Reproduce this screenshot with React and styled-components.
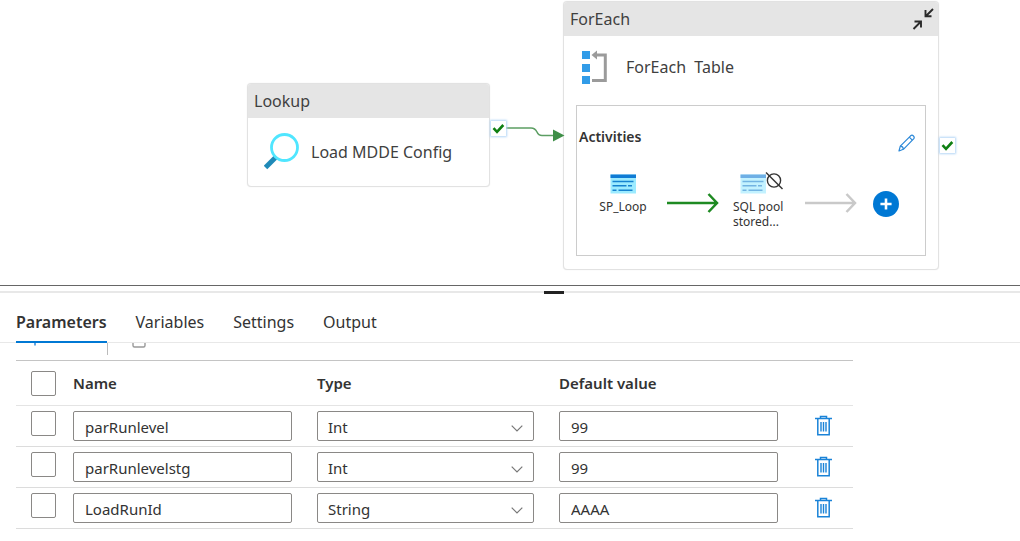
import React, { useState } from "react";
import styled, { createGlobalStyle } from "styled-components";

const GlobalStyle = createGlobalStyle`
  * { box-sizing: border-box; }
  body { margin: 0; background: #fff; }
  body, button, input, select {
    font-family: "Noto Sans", "Open Sans", "Segoe UI", sans-serif;
    font-size: 15px;
    color: #333;
  }
  button { border: 0; padding: 0; background: none; cursor: pointer; }
  svg { display: block; }
`;

const Page = styled.div`
  display: flex;
  flex-direction: column;
  min-height: 100vh;
`;

/* ---------- pipeline canvas ---------- */

const Canvas = styled.main`
  position: relative;
  height: 286px;
  overflow: hidden;
  border-bottom: 1px solid #666;
`;

const Node = styled.section`
  position: absolute;
  left: ${(p) => p.$x}px;
  top: ${(p) => p.$y}px;
  width: ${(p) => p.$width}px;
  background: #fff;
  border: 1px solid #e2e2e2;
  border-radius: 4px;
  box-shadow: 0 0 1px rgba(0, 0, 0, 0.12);
`;

const NodeHeader = styled.header`
  display: flex;
  align-items: center;
  justify-content: space-between;
  height: 34px;
  padding: 0 4px 0 6px;
  background: #e5e5e5;
  border-radius: 3px 3px 0 0;
`;

const NodeKind = styled.span`
  font-size: 16px;
  line-height: 24px;
  color: #404040;
`;

const NodeBody = styled.div`
  display: flex;
  align-items: center;
  gap: ${(p) => p.$gap}px;
  height: ${(p) => p.$height}px;
  padding: 0 16px;
`;

const NodeName = styled.span`
  font-size: 16px;
  line-height: 24px;
  white-space: pre;
  color: #404040;
`;

const Connector = styled.svg`
  position: absolute;
  left: 500px;
  top: 116px;
`;

const Port = styled.span`
  position: absolute;
  left: ${(p) => p.$x}px;
  top: ${(p) => p.$y}px;
  display: grid;
  place-items: center;
  width: 15px;
  height: 15px;
  background: #fff;
  box-shadow: 0 0 2px 1px #b5d6f6;
`;

const ActivityPanel = styled.div`
  margin: 8px 12px 13px;
  height: 151px;
  padding: 20px 0 0 2px;
  border: 1px solid #ccc;
`;

const ActivityHeading = styled.div`
  display: flex;
  align-items: flex-start;
  justify-content: space-between;
  height: 48px;
  padding-right: 10px;
`;

const ActivityTitle = styled.h2`
  margin: 0;
  font-size: 14px;
  line-height: 22px;
  font-weight: 600;
  color: #333;
`;

const EditButton = styled.button`
  padding-top: 8px;
`;

const ActivityFlow = styled.div`
  display: flex;
  align-items: flex-start;
`;

const Activity = styled.figure`
  display: flex;
  flex-direction: column;
  align-items: ${(p) => (p.$wide ? "flex-start" : "center")};
  width: ${(p) => (p.$wide ? 72 : 88)}px;
  margin: 0;
`;

const ActivityIcon = styled.span`
  display: flex;
  height: 25px;
  padding-left: ${(p) => (p.$inset ? 7 : 0)}px;
`;

const ActivityLabel = styled.figcaption`
  width: ${(p) => (p.$narrow ? "56px" : "auto")};
  font-size: 12px;
  line-height: 15px;
  color: #333;
`;

const FlowArrow = styled.span`
  flex: none;
  width: ${(p) => p.$width}px;
  padding-top: 19px;
`;

const AddButton = styled.button`
  display: grid;
  place-items: center;
  width: 26px;
  height: 26px;
  margin: 17px 0 0 16px;
  border-radius: 50%;
  background: #0078d4;
`;

/* ---------- properties pane ---------- */

const Splitter = styled.div`
  display: flex;
  justify-content: center;
  height: 9px;
  padding: 5px 0 0;
`;

const SplitterLine = styled.div`
  display: flex;
  justify-content: center;
  width: 100%;
  height: 2px;
  background: #e8e8e8;
`;

const SplitterHandle = styled.span`
  width: 20px;
  height: 3px;
  margin-left: 88px;
  background: #222;
`;

const TabBar = styled.div`
  display: flex;
  gap: 29px;
  height: 48px;
  padding: 3px 16px 0;
  border-bottom: 1px solid #e8e8e8;
`;

const Tab = styled.button`
  height: 45px;
  padding-top: 4px;
  font-size: 16px;
  line-height: 22px;
  font-weight: ${(p) => (p.$active ? 600 : 400)};
  border-bottom: 2px solid ${(p) => (p.$active ? "#0078d4" : "transparent")};
`;

const ToolbarClip = styled.div`
  display: flex;
  align-items: flex-end;
  height: 17px;
  padding: 0 16px 5px;
  overflow: hidden;
`;

const Toolbar = styled.div`
  display: flex;
  align-items: center;
  height: 32px;
  padding-left: 12px;
`;

const Divider = styled.span`
  width: 1px;
  height: 32px;
  margin: 0 24px 0 65px;
  background: #bbb;
`;

const TableArea = styled.div`
  padding: 0 16px 12px;
`;

const ParameterTable = styled.table`
  width: 100%;
  max-width: 837px;
  table-layout: fixed;
  border-collapse: separate;
  border-spacing: 0;
  border-top: 1px solid #c4c4c4;
`;

const Col = styled.col`
  width: ${(p) => p.$width};
`;

const HeadCell = styled.th`
  height: 45px;
  padding: 0;
  text-align: left;
  font-size: 15px;
  line-height: 24px;
  font-weight: 600;
  border-bottom: 1px solid #e4e4e4;
`;

const Cell = styled.td`
  height: 41px;
  padding: 5px 25px 5px 0;
  vertical-align: top;
  border-bottom: 1px solid #dcdcdc;
`;

const ActionCell = styled(Cell)`
  padding-left: 12px;
  padding-right: 0;
`;

const Check = styled.input`
  appearance: none;
  display: block;
  width: 25px;
  height: 25px;
  margin: 0 0 0 15px;
  border: 1px solid #8a8886;
  border-radius: 2px;
  background: #fff;
  &:checked { background: #0078d4; }
`;

const TextField = styled.input`
  display: block;
  width: 100%;
  height: 30px;
  padding: 1px 10px 0 11px;
  border: 1px solid #8a8886;
  border-radius: 2px;
  background: #fff;
`;

const SelectWrap = styled.div`
  position: relative;
`;

const SelectField = styled.select`
  appearance: none;
  display: block;
  width: 100%;
  height: 30px;
  padding: 1px 30px 0 10px;
  border: 1px solid #8a8886;
  border-radius: 2px;
  background: #fff;
`;

const Chevron = styled.svg`
  position: absolute;
  right: 11px;
  top: 14px;
  pointer-events: none;
`;

const DeleteButton = styled.button`
  display: block;
  padding-top: 4px;
`;

/* ---------- drawings ---------- */

const CheckMark = () => (
  <svg width="13" height="12" viewBox="0 0 13 12" fill="none" aria-hidden="true">
    <path d="M1.5 5.2 L5 8.8 L11.3 2" stroke="#0e7f12" strokeWidth="2.6" />
  </svg>
);

const LookupIcon = () => (
  <svg width="36" height="38" viewBox="0 0 36 38" fill="none" aria-hidden="true">
    <path d="M11.5 24.5 L1.5 34.5" stroke="#1f8ab8" strokeWidth="5" />
    <circle cx="20.5" cy="14.5" r="13" fill="#fff" stroke="#50e6ff" strokeWidth="2.8" />
  </svg>
);

const ForEachIcon = () => (
  <svg width="27" height="34" viewBox="0 0 27 34" fill="none" aria-hidden="true">
    <path d="M2 1h8v8H2zM2 14h8v8H2zM2 26h8v8H2z" fill="#329ce8" />
    <path d="M14 5 H25.3 V30.5 H12" stroke="#9b9b9b" strokeWidth="3" />
    <path d="M11.5 5 L17 0.5 V9.5 Z" fill="#9b9b9b" />
  </svg>
);

const CollapseIcon = () => (
  <svg width="22" height="22" viewBox="0 0 22 22" fill="none" stroke="#2a2a2a" strokeWidth="1.9" aria-hidden="true">
    <path d="M21 1 L14 8 M13.5 2 V8.3 H19.5" />
    <path d="M1.5 21 L8.5 14 M2.5 13.5 H9 V19.5" />
  </svg>
);

const PencilIcon = () => (
  <svg width="17" height="18" viewBox="0 0 17 18" fill="none" stroke="#2b88d8" strokeWidth="1.2" strokeLinejoin="round" aria-hidden="true">
    <path d="M1 17 L2.3 12.2 L12.6 1.8 C14.5 0.2 17.3 2.8 15.6 4.9 L5.4 15.3 Z" />
    <path d="M11.3 3.2 L14.3 6.2 M2.3 12.2 C4 12.3 5.3 13.4 5.4 15.3" />
  </svg>
);

const ProcedureIcon = ({ faded }) => (
  <svg width="26" height="20" viewBox="0 0 26 20" opacity={faded ? 0.6 : 1} aria-hidden="true">
    <path d="M0.5 0.5h25.5v19H0.5z" fill="#9cebff" />
    <path d="M0.5 0.5h25.5v3.5H0.5z" fill="#0f7bd4" />
    <path
      d="M2.5 7.5h21 M2.5 11.8h14 M18 11.8h4 M2.5 16.2h4 M8.5 16.2h14"
      stroke="#1683cf"
      strokeWidth="1.6"
    />
  </svg>
);

const SkippedIcon = () => (
  <svg width="18" height="18" viewBox="0 0 18 18" fill="none" stroke="#333" strokeWidth="1.4" aria-hidden="true">
    <circle cx="8" cy="6.5" r="6.6" />
    <path d="M0 -1.5 L16.5 15" />
  </svg>
);

const SkippedMark = styled.span`
  svg { overflow: visible; }
`;

const Arrow = ({ color }) => (
  <svg width="52" height="20" viewBox="0 0 52 20" fill="none" stroke={color} strokeWidth="2.5" aria-hidden="true">
    <path d="M0 10 H50 M41.5 1 L50 10 L41.5 19" />
  </svg>
);

const TrashIcon = () => (
  <svg width="17" height="21" viewBox="0 0 17 21" fill="none" stroke="#1a83d8" aria-hidden="true">
    <path d="M0 3.5 H17" strokeWidth="1.5" />
    <path d="M5.5 3 V1.5 H11.5 V3 M2.8 3.5 V19.8 H14.2 V3.5" strokeWidth="1.5" />
    <path d="M6 7 V16.5 M8.5 7 V16.5 M11 7 V16.5" strokeWidth="1.4" />
  </svg>
);

const PlusIcon = ({ size, color, weight }) => (
  <svg width={size} height={size} viewBox="0 0 14 14" stroke={color} strokeWidth={weight} aria-hidden="true">
    <path d="M7 0.5 V13.5 M0.5 7 H13.5" />
  </svg>
);

const ToolbarTrash = () => (
  <svg width="14" height="17" viewBox="0 0 14 17" fill="none" stroke="#999" strokeWidth="1.4" aria-hidden="true">
    <path d="M0 3 H14 M1 3 V14.5 Q1 16 2.5 16 H11.5 Q13 16 13 14.5 V3" />
  </svg>
);

const TABS = ["Parameters", "Variables", "Settings", "Output"];

const PARAMETERS = [
  { name: "parRunlevel", type: "Int", value: "99" },
  { name: "parRunlevelstg", type: "Int", value: "99" },
  { name: "LoadRunId", type: "String", value: "AAAA" },
];

function PipelineCanvas() {
  return (
    <Canvas>
      <Node $x={247} $y={83} $width={243}>
        <NodeHeader>
          <NodeKind>Lookup</NodeKind>
        </NodeHeader>
        <NodeBody $gap={11} $height={68}>
          <LookupIcon />
          <NodeName>Load MDDE Config</NodeName>
        </NodeBody>
      </Node>

      <Node $x={563} $y={1} $width={376}>
        <NodeHeader>
          <NodeKind>ForEach</NodeKind>
          <button type="button" aria-label="Collapse">
            <CollapseIcon />
          </button>
        </NodeHeader>
        <NodeBody $gap={19} $height={61}>
          <ForEachIcon />
          <NodeName>{"ForEach  Table"}</NodeName>
        </NodeBody>
        <ActivityPanel>
          <ActivityHeading>
            <ActivityTitle>Activities</ActivityTitle>
            <EditButton type="button" aria-label="Edit activities">
              <PencilIcon />
            </EditButton>
          </ActivityHeading>
          <ActivityFlow>
            <Activity>
              <ActivityIcon>
                <ProcedureIcon />
              </ActivityIcon>
              <ActivityLabel>SP_Loop</ActivityLabel>
            </Activity>
            <FlowArrow $width={66}>
              <Arrow color="#1e8a22" />
            </FlowArrow>
            <Activity $wide>
              <ActivityIcon $inset>
                <ProcedureIcon faded />
                <SkippedMark>
                  <SkippedIcon />
                </SkippedMark>
              </ActivityIcon>
              <ActivityLabel $narrow>SQL pool stored...</ActivityLabel>
            </Activity>
            <FlowArrow $width={52}>
              <Arrow color="#c9c9c9" />
            </FlowArrow>
            <AddButton type="button" aria-label="Add activity">
              <PlusIcon size={12} color="#fff" weight={3} />
            </AddButton>
          </ActivityFlow>
        </ActivityPanel>
      </Node>

      <Connector width="66" height="30" viewBox="0 0 66 30" fill="none" aria-hidden="true">
        <path
          d="M6 12 H31 C35 12 36 14 37 16 C38 18.5 39 19.5 42 19.5 H54"
          stroke="#5c9e63"
          strokeWidth="1.5"
        />
        <path d="M53 13.5 L64.5 19.5 L53 25.5 Z" fill="#3f8f48" />
      </Connector>
      <Port $x={491} $y={121}>
        <CheckMark />
      </Port>
      <Port $x={940} $y={138}>
        <CheckMark />
      </Port>
    </Canvas>
  );
}

function ParameterRow({ parameter }) {
  const { name, type, value } = parameter;
  return (
    <tr>
      <Cell>
        <Check type="checkbox" aria-label={`Select ${name}`} />
      </Cell>
      <Cell>
        <TextField aria-label="Name" defaultValue={name} />
      </Cell>
      <Cell>
        <SelectWrap>
          <SelectField aria-label="Type" defaultValue={type}>
            <option>Int</option>
            <option>String</option>
          </SelectField>
          <Chevron width="12" height="7" viewBox="0 0 12 7" fill="none" stroke="#777" strokeWidth="1.2">
            <path d="M0.7 0.7 L6 6 L11.3 0.7" />
          </Chevron>
        </SelectWrap>
      </Cell>
      <Cell>
        <TextField aria-label="Default value" defaultValue={value} />
      </Cell>
      <ActionCell>
        <DeleteButton type="button" aria-label={`Delete ${name}`}>
          <TrashIcon />
        </DeleteButton>
      </ActionCell>
    </tr>
  );
}

export default function App() {
  const [active, setActive] = useState("Parameters");
  return (
    <Page>
      <GlobalStyle />
      <PipelineCanvas />
      <Splitter>
        <SplitterLine>
          <SplitterHandle />
        </SplitterLine>
      </Splitter>
      <TabBar role="tablist">
        {TABS.map((tab) => (
          <Tab
            key={tab}
            type="button"
            role="tab"
            aria-selected={tab === active}
            $active={tab === active}
            onClick={() => setActive(tab)}
          >
            {tab}
          </Tab>
        ))}
      </TabBar>
      <ToolbarClip>
        <Toolbar>
          <button type="button" aria-label="New">
            <PlusIcon size={14} color="#2b88d8" weight={1.5} />
          </button>
          <Divider />
          <button type="button" aria-label="Delete">
            <ToolbarTrash />
          </button>
        </Toolbar>
      </ToolbarClip>
      <TableArea>
        <ParameterTable>
          <colgroup>
            <Col $width="57px" />
            <Col $width="244px" />
            <Col $width="242px" />
            <Col $width="244px" />
            <Col $width="auto" />
          </colgroup>
          <thead>
            <tr>
              <HeadCell>
                <Check type="checkbox" aria-label="Select all" />
              </HeadCell>
              <HeadCell scope="col">Name</HeadCell>
              <HeadCell scope="col">Type</HeadCell>
              <HeadCell scope="col">Default value</HeadCell>
              <HeadCell />
            </tr>
          </thead>
          <tbody>
            {PARAMETERS.map((parameter) => (
              <ParameterRow key={parameter.name} parameter={parameter} />
            ))}
          </tbody>
        </ParameterTable>
      </TableArea>
    </Page>
  );
}
